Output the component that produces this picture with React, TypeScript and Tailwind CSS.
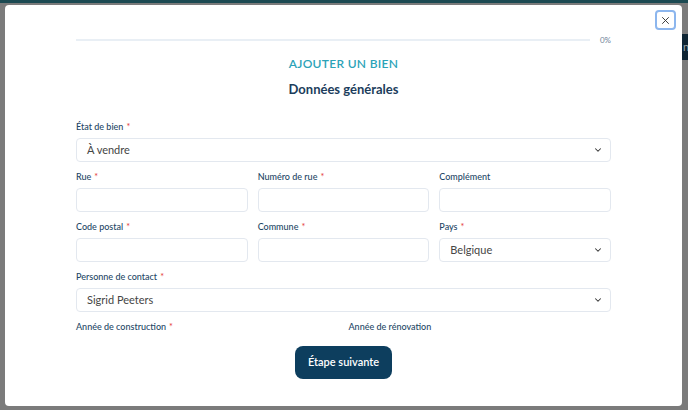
import React from "react";

const Label = ({ text, required }: { text: string; required?: boolean }) => (
  <div className="h-[12px] mb-[5px] text-[9px] leading-[12px] font-medium text-[#1e4766]">
    {text}
    {required && <span className="ml-[3px] text-[#e53e3e]">*</span>}
  </div>
);

const Chevron = () => (
  <svg width="10" height="10" viewBox="0 0 24 24" fill="none" stroke="#333" strokeWidth="2.5" strokeLinecap="round" strokeLinejoin="round">
    <path d="M6 9l6 6 6-6" />
  </svg>
);

const Input = () => (
  <div className="h-[24px] rounded-[4px] border border-[#e3e8ef] bg-white" />
);

const Select = ({ value }: { value: string }) => (
  <div className="flex h-[24px] items-center justify-between rounded-[4px] border border-[#e3e8ef] bg-white pl-[10px] pr-[7px]">
    <span className="text-[11px] text-[#454545]">{value}</span>
    <Chevron />
  </div>
);

const Field = ({
  label,
  required,
  children,
}: {
  label: string;
  required?: boolean;
  children?: React.ReactNode;
}) => (
  <div className="flex flex-col">
    <Label text={label} required={required} />
    {children}
  </div>
);

export default function App() {
  return (
    <div className="relative h-[410px] w-[688px] overflow-hidden bg-[#7b7b7b] font-['Lato',sans-serif]">
      {/* page behind the overlay */}
      <div className="h-[3px] bg-[#1c4a52]" />
      <div className="absolute left-[672px] top-[34px] flex h-[26px] w-[40px] items-center bg-[#0e2534] pl-[11px] text-[11px] text-[#9aa3a8]">
        n
      </div>

      {/* modal */}
      <div className="absolute left-[5px] top-[5px] h-[401px] w-[677px] rounded-[4px] bg-white">
        <button className="absolute left-[650px] top-[5px] flex h-[20px] w-[21px] items-center justify-center rounded-[4px] border-2 border-[#8cb6ee] text-[#333]">
          <svg width="9" height="9" viewBox="0 0 24 24" fill="none" stroke="currentColor" strokeWidth="2.5" strokeLinecap="round">
            <path d="M4 4l16 16M20 4L4 20" />
          </svg>
        </button>

        <div className="px-[71px]">
          <div className="mt-[31px] flex h-[8px] items-center">
            <div className="h-[2px] flex-1 bg-[#e9eff5]" />
            <span className="ml-[10px] text-[8px] text-[#6f8399]">0%</span>
          </div>

          <div className="mt-[12px] text-center text-[12px] leading-[16px] font-semibold tracking-[0.3px] text-[#2ba3b8]">
            AJOUTER UN BIEN
          </div>
          <div className="mt-[8px] text-center text-[13px] leading-[18px] font-bold text-[#1c3d5c]">
            Données générales
          </div>

          <div className="mt-[23px] flex flex-col gap-[9px]">
            <Field label="État de bien" required>
              <Select value="À vendre" />
            </Field>

            <div className="grid grid-cols-3 gap-x-[10px]">
              <Field label="Rue" required>
                <Input />
              </Field>
              <Field label="Numéro de rue" required>
                <Input />
              </Field>
              <Field label="Complément">
                <Input />
              </Field>
            </div>

            <div className="grid grid-cols-3 gap-x-[10px]">
              <Field label="Code postal" required>
                <Input />
              </Field>
              <Field label="Commune" required>
                <Input />
              </Field>
              <Field label="Pays" required>
                <Select value="Belgique" />
              </Field>
            </div>

            <Field label="Personne de contact" required>
              <Select value="Sigrid Peeters" />
            </Field>

            <div className="grid grid-cols-2 gap-x-[10px]">
              <Label text="Année de construction" required />
              <Label text="Année de rénovation" />
            </div>
          </div>

          <div className="mt-[8px] flex justify-center">
            <button className="h-[33px] w-[97px] rounded-[8px] bg-[#0d3e5e] text-[11px] font-semibold text-white">
              Étape suivante
            </button>
          </div>
        </div>
      </div>
    </div>
  );
}
